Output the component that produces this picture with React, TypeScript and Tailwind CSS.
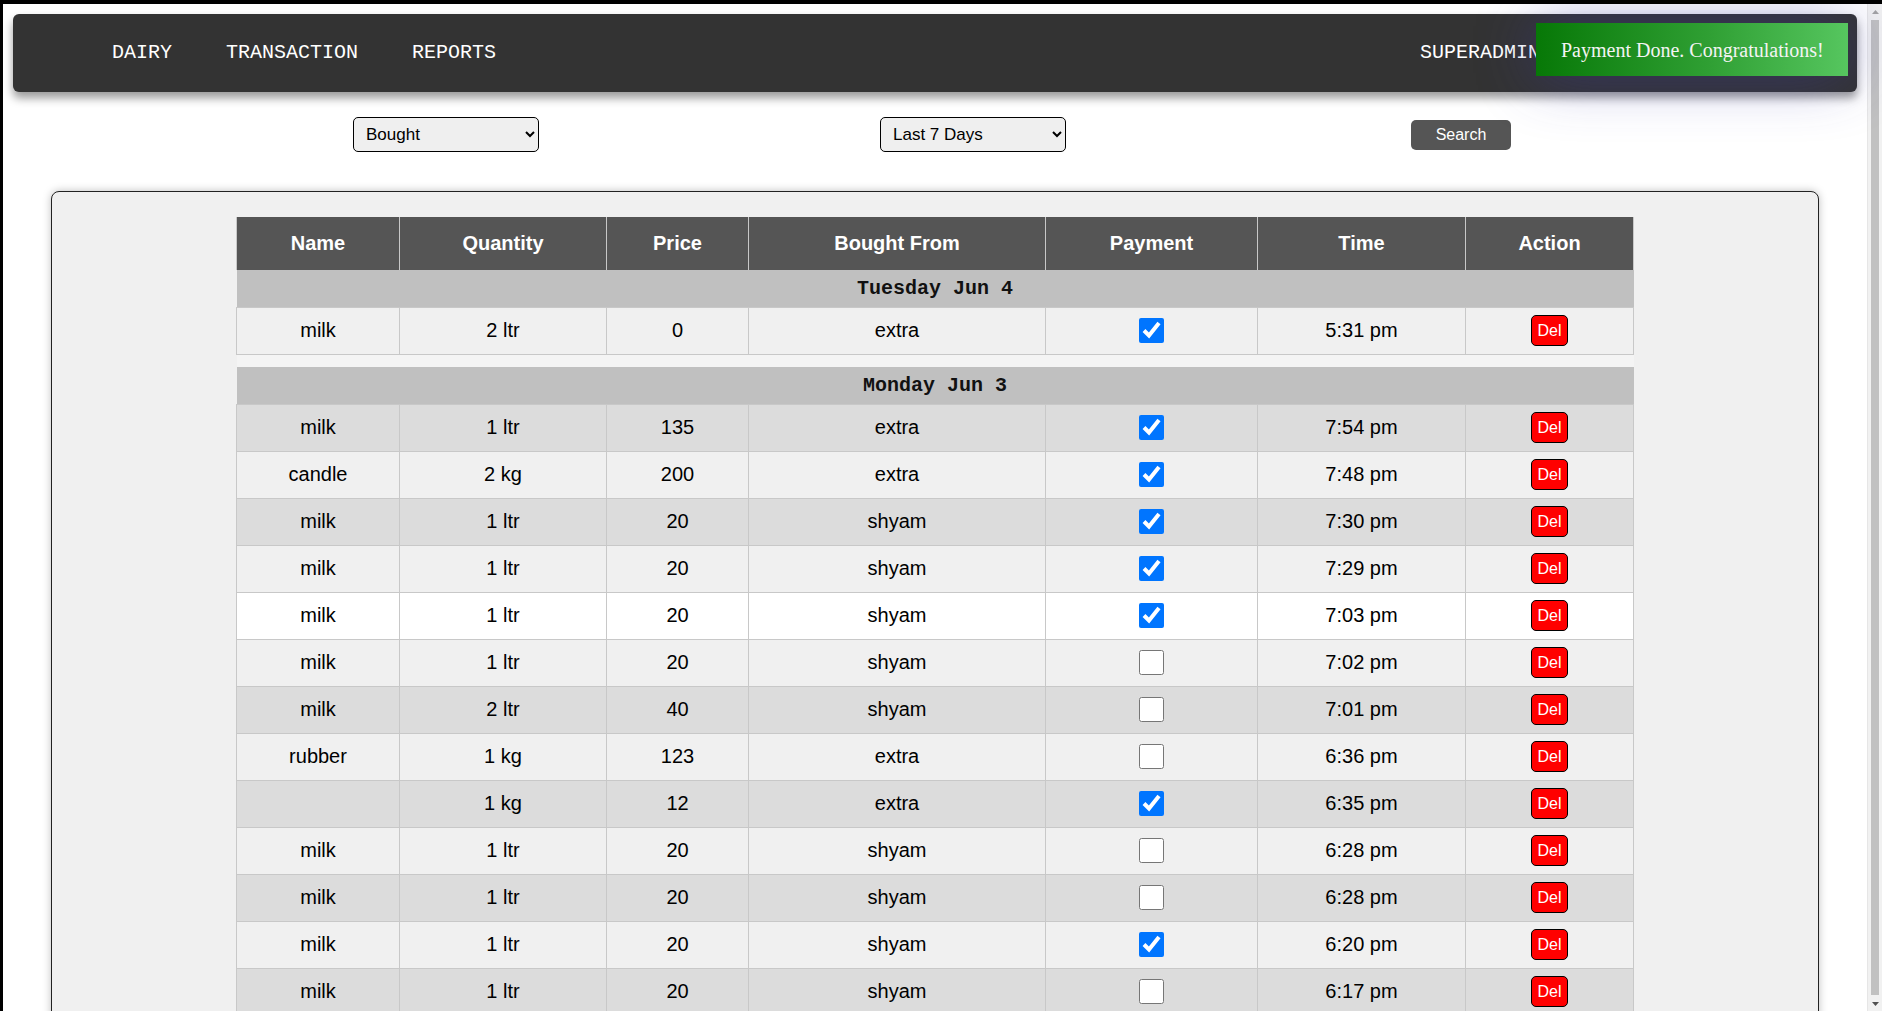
import React from "react";

type Row = {
  name: string;
  qty: string;
  price: string;
  from: string;
  paid: boolean;
  time: string;
};

const tuesday: Row[] = [
  { name: "milk", qty: "2 ltr", price: "0", from: "extra", paid: true, time: "5:31 pm" },
];

const monday: Row[] = [
  { name: "milk", qty: "1 ltr", price: "135", from: "extra", paid: true, time: "7:54 pm" },
  { name: "candle", qty: "2 kg", price: "200", from: "extra", paid: true, time: "7:48 pm" },
  { name: "milk", qty: "1 ltr", price: "20", from: "shyam", paid: true, time: "7:30 pm" },
  { name: "milk", qty: "1 ltr", price: "20", from: "shyam", paid: true, time: "7:29 pm" },
  { name: "milk", qty: "1 ltr", price: "20", from: "shyam", paid: true, time: "7:03 pm" },
  { name: "milk", qty: "1 ltr", price: "20", from: "shyam", paid: false, time: "7:02 pm" },
  { name: "milk", qty: "2 ltr", price: "40", from: "shyam", paid: false, time: "7:01 pm" },
  { name: "rubber", qty: "1 kg", price: "123", from: "extra", paid: false, time: "6:36 pm" },
  { name: "", qty: "1 kg", price: "12", from: "extra", paid: true, time: "6:35 pm" },
  { name: "milk", qty: "1 ltr", price: "20", from: "shyam", paid: false, time: "6:28 pm" },
  { name: "milk", qty: "1 ltr", price: "20", from: "shyam", paid: false, time: "6:28 pm" },
  { name: "milk", qty: "1 ltr", price: "20", from: "shyam", paid: true, time: "6:20 pm" },
  { name: "milk", qty: "1 ltr", price: "20", from: "shyam", paid: false, time: "6:17 pm" },
  { name: "milk", qty: "1 ltr", price: "20", from: "shyam", paid: false, time: "6:15 pm" },
];

const cell = "border border-[#c8c8c8] h-[47px] p-0 text-center align-middle";

function DataRow({ r, bg }: { r: Row; bg: string }) {
  return (
    <tr className={bg}>
      <td className={cell}>{r.name}</td>
      <td className={cell}>{r.qty}</td>
      <td className={cell}>{r.price}</td>
      <td className={cell}>{r.from}</td>
      <td className={cell}>
        <input
          type="checkbox"
          defaultChecked={r.paid}
          className="w-[25px] h-[25px] align-middle m-0"
        />
      </td>
      <td className={cell}>{r.time}</td>
      <td className={cell}>
        <button className="bg-[#ff0000] text-white border border-black rounded-[5px] px-[5px] py-[5px] text-[16px] leading-[19px] align-middle">
          Del
        </button>
      </td>
    </tr>
  );
}

function GroupRow({ label }: { label: string }) {
  return (
    <tr>
      <td
        colSpan={7}
        className="bg-[#c0c0c0] h-[37px] p-0 text-center font-bold font-['Liberation_Mono',monospace] text-[20px] text-[#111]"
      >
        {label}
      </td>
    </tr>
  );
}

function Scrollbar() {
  return (
    <div className="w-[15px] shrink-0 flex flex-col bg-[#f1f1f1] border-l border-[#e6e6e6]">
      <div className="h-[15px] flex items-center justify-center">
        <svg width="7" height="4" viewBox="0 0 7 4">
          <polygon points="0,4 7,4 3.5,0" fill="#a3a3a3" />
        </svg>
      </div>
      <div className="flex-1 mx-[3px] my-[1px] bg-[#c1c1c1]" />
      <div className="h-[15px] flex items-center justify-center">
        <svg width="7" height="4" viewBox="0 0 7 4">
          <polygon points="0,0 7,0 3.5,4" fill="#505050" />
        </svg>
      </div>
    </div>
  );
}

export default function App() {
  const headers = ["Name", "Quantity", "Price", "Bought From", "Payment", "Time", "Action"];
  return (
    <div className="relative h-screen overflow-hidden flex border-t-4 border-l-[3px] border-black bg-black font-['Liberation_Sans',Arial,sans-serif]">
      <div className="flex-1 min-w-0 overflow-hidden bg-white">
        {/* Navbar */}
        <nav className="mt-[10px] mx-[10px] h-[78px] rounded-[6px] bg-[#333333] shadow-[0_6px_10px_rgba(0,0,0,0.4)] flex items-center pl-[99px] pr-[317px] font-['Liberation_Mono',monospace] text-[20px] text-white">
          <span>DAIRY</span>
          <span className="ml-[54px]">TRANSACTION</span>
          <span className="ml-[54px]">REPORTS</span>
          <span className="ml-auto">SUPERADMIN</span>
        </nav>

        {/* Controls */}
        <div className="mt-[25px] flex items-center pl-[350px]">
          <select className="w-[186px] h-[35px] border border-black rounded-[5px] bg-[#efefef] pl-[8px] text-[17px] text-black">
            <option>Bought</option>
            <option>Sold</option>
          </select>
          <select className="ml-[341px] w-[186px] h-[35px] border border-black rounded-[5px] bg-[#efefef] pl-[8px] text-[17px] text-black">
            <option>Last 7 Days</option>
            <option>Last 30 Days</option>
          </select>
          <button className="ml-[345px] w-[100px] h-[30px] rounded-[5px] bg-[#555555] text-white text-[16px]">
            Search
          </button>
        </div>

        {/* Card */}
        <div className="mt-[39px] mx-[48px] mb-[20px] bg-[#f0f0f0] border border-[#222] rounded-[8px] shadow-[0_0_8px_rgba(0,0,0,0.25)] pt-[25px] pb-[30px]">
          <table className="mx-auto w-[1397px] table-fixed border-collapse text-[20px] leading-[23px] text-black">
            <colgroup>
              <col className="w-[163px]" />
              <col className="w-[207px]" />
              <col className="w-[142px]" />
              <col className="w-[297px]" />
              <col className="w-[212px]" />
              <col className="w-[208px]" />
              <col className="w-[168px]" />
            </colgroup>
            <thead>
              <tr className="bg-[#555555]">
                {headers.map((h) => (
                  <th
                    key={h}
                    className="h-[53px] p-0 border-x border-[#c8c8c8] text-white font-bold text-center"
                  >
                    {h}
                  </th>
                ))}
              </tr>
            </thead>
            <tbody>
              <GroupRow label="Tuesday Jun 4" />
              {tuesday.map((r, i) => (
                <DataRow key={"t" + i} r={r} bg="bg-[#f0f0f0]" />
              ))}
              <tr>
                <td colSpan={7} className="h-[13px] p-0 bg-[#f4f4f4]"></td>
              </tr>
              <GroupRow label="Monday Jun 3" />
              {monday.map((r, i) => (
                <DataRow
                  key={"m" + i}
                  r={r}
                  bg={i === 4 ? "bg-white" : i % 2 === 0 ? "bg-[#dcdcdc]" : "bg-[#f0f0f0]"}
                />
              ))}
            </tbody>
          </table>
        </div>
      </div>

      <Scrollbar />

      {/* Toast */}
      <div className="absolute top-[19px] right-[34px] w-[312px] h-[53px] flex items-center pl-[25px] bg-[linear-gradient(to_right,#077807,#2f9f33_55%,#56c65f)] shadow-[0_0_60px_rgba(60,60,170,0.45)] font-['Liberation_Serif',serif] text-[20px] text-[#f4f4f4]">
        Payment Done. Congratulations!
      </div>
    </div>
  );
}
